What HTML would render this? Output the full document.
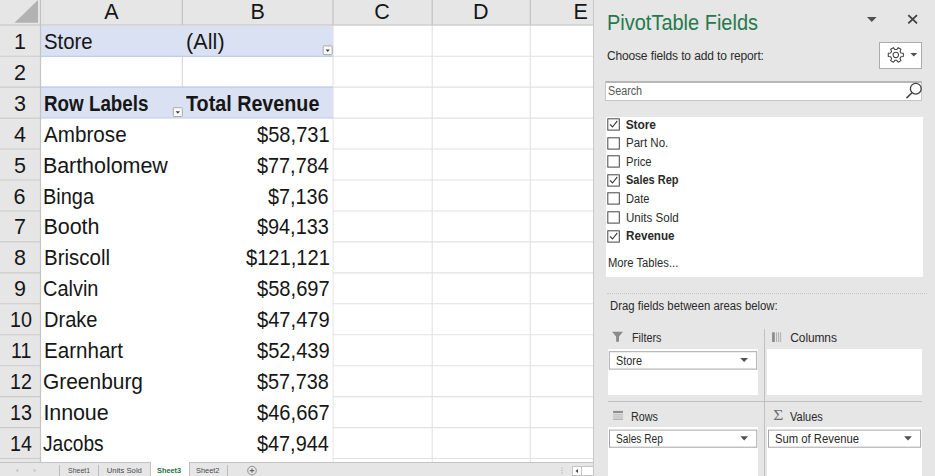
<!DOCTYPE html>
<html><head><meta charset="utf-8"><title>PivotTable</title>
<style>
html,body{margin:0;padding:0;}
body{width:935px;height:476px;overflow:hidden;background:#fff;position:relative;font-family:"Liberation Sans",sans-serif;color:#111;}
div,span{position:absolute;white-space:nowrap;box-sizing:border-box;}
.pane{left:594px;top:0;width:341px;height:476px;background:#e6e6e6;}
.box{background:#fff;}
.t{line-height:1;}
</style></head><body>

<svg style="position:absolute;left:0;top:0" width="594" height="463"><rect x="0" y="0" width="593.3" height="25" fill="#e6e6e6"/><rect x="0" y="25" width="40.5" height="438" fill="#e6e6e6"/><polygon points="38,0 38,22.7 14.5,22.7" fill="#b2b2b2"/><line x1="41" x2="593.3" y1="56.20" y2="56.20" stroke="#e2e2e2" stroke-width="1.1"/><line x1="41" x2="593.3" y1="87.15" y2="87.15" stroke="#e2e2e2" stroke-width="1.1"/><line x1="41" x2="593.3" y1="118.10" y2="118.10" stroke="#e2e2e2" stroke-width="1.1"/><line x1="41" x2="593.3" y1="149.05" y2="149.05" stroke="#e2e2e2" stroke-width="1.1"/><line x1="41" x2="593.3" y1="180.00" y2="180.00" stroke="#e2e2e2" stroke-width="1.1"/><line x1="41" x2="593.3" y1="210.95" y2="210.95" stroke="#e2e2e2" stroke-width="1.1"/><line x1="41" x2="593.3" y1="241.90" y2="241.90" stroke="#e2e2e2" stroke-width="1.1"/><line x1="41" x2="593.3" y1="272.85" y2="272.85" stroke="#e2e2e2" stroke-width="1.1"/><line x1="41" x2="593.3" y1="303.80" y2="303.80" stroke="#e2e2e2" stroke-width="1.1"/><line x1="41" x2="593.3" y1="334.75" y2="334.75" stroke="#e2e2e2" stroke-width="1.1"/><line x1="41" x2="593.3" y1="365.70" y2="365.70" stroke="#e2e2e2" stroke-width="1.1"/><line x1="41" x2="593.3" y1="396.65" y2="396.65" stroke="#e2e2e2" stroke-width="1.1"/><line x1="41" x2="593.3" y1="427.60" y2="427.60" stroke="#e2e2e2" stroke-width="1.1"/><line x1="41" x2="593.3" y1="458.55" y2="458.55" stroke="#e2e2e2" stroke-width="1.1"/><line x1="182.3" x2="182.3" y1="25.5" y2="462.5" stroke="#d6d6d6" stroke-width="1.1"/><line x1="333.0" x2="333.0" y1="25.5" y2="462.5" stroke="#e2e2e2" stroke-width="1.1"/><line x1="432.2" x2="432.2" y1="25.5" y2="462.5" stroke="#e2e2e2" stroke-width="1.1"/><line x1="530.3" x2="530.3" y1="25.5" y2="462.5" stroke="#e2e2e2" stroke-width="1.1"/><rect x="41" y="25.6" width="292.1" height="31.00" fill="#d9e1f2"/><line x1="41" x2="333.1" y1="56.30" y2="56.30" stroke="#b9c8e8" stroke-width="1"/><rect x="41" y="86.65" width="292.1" height="31.85" fill="#d9e1f2"/><line x1="41" x2="333.1" y1="87.15" y2="87.15" stroke="#b9c8e8" stroke-width="1"/><line x1="41" x2="333.1" y1="118.10" y2="118.10" stroke="#b9c8e8" stroke-width="1"/><rect x="41" y="118.60" width="291.4" height="343.80" fill="#fff"/><line x1="0" x2="40" y1="56.20" y2="56.20" stroke="#cbcbcb" stroke-width="1.1"/><line x1="0" x2="40" y1="87.15" y2="87.15" stroke="#cbcbcb" stroke-width="1.1"/><line x1="0" x2="40" y1="118.10" y2="118.10" stroke="#cbcbcb" stroke-width="1.1"/><line x1="0" x2="40" y1="149.05" y2="149.05" stroke="#cbcbcb" stroke-width="1.1"/><line x1="0" x2="40" y1="180.00" y2="180.00" stroke="#cbcbcb" stroke-width="1.1"/><line x1="0" x2="40" y1="210.95" y2="210.95" stroke="#cbcbcb" stroke-width="1.1"/><line x1="0" x2="40" y1="241.90" y2="241.90" stroke="#cbcbcb" stroke-width="1.1"/><line x1="0" x2="40" y1="272.85" y2="272.85" stroke="#cbcbcb" stroke-width="1.1"/><line x1="0" x2="40" y1="303.80" y2="303.80" stroke="#cbcbcb" stroke-width="1.1"/><line x1="0" x2="40" y1="334.75" y2="334.75" stroke="#cbcbcb" stroke-width="1.1"/><line x1="0" x2="40" y1="365.70" y2="365.70" stroke="#cbcbcb" stroke-width="1.1"/><line x1="0" x2="40" y1="396.65" y2="396.65" stroke="#cbcbcb" stroke-width="1.1"/><line x1="0" x2="40" y1="427.60" y2="427.60" stroke="#cbcbcb" stroke-width="1.1"/><line x1="0" x2="40" y1="458.55" y2="458.55" stroke="#cbcbcb" stroke-width="1.1"/><line x1="0" x2="593.3" y1="25" y2="25" stroke="#cecece" stroke-width="1.6"/><line x1="40.5" x2="40.5" y1="0" y2="25" stroke="#c2c2c2" stroke-width="1.2"/><line x1="182.3" x2="182.3" y1="0" y2="25" stroke="#c2c2c2" stroke-width="1.2"/><line x1="333.0" x2="333.0" y1="0" y2="25" stroke="#c2c2c2" stroke-width="1.2"/><line x1="432.2" x2="432.2" y1="0" y2="25" stroke="#c2c2c2" stroke-width="1.2"/><line x1="530.3" x2="530.3" y1="0" y2="25" stroke="#c2c2c2" stroke-width="1.2"/><line x1="40.5" x2="40.5" y1="25" y2="462.5" stroke="#c4c4c4" stroke-width="1.2"/></svg>
<svg style="position:absolute;left:321px;top:44px" width="13" height="13"><rect x="2.20" y="1.90" width="9" height="8.8" rx="0.8" fill="#fbfbfb" stroke="#a9a9a9"/><polygon points="4.60,5.50 8.80,5.50 6.70,7.90" fill="#3c3c3c"/></svg>
<svg style="position:absolute;left:171px;top:106px" width="13" height="13"><rect x="2.30" y="1.70" width="9" height="8.8" rx="0.8" fill="#fbfbfb" stroke="#a9a9a9"/><polygon points="4.70,5.30 8.90,5.30 6.80,7.70" fill="#3c3c3c"/></svg>
<div style="left:0;top:462px;width:594px;height:14px;background:#e6e6e6;border-top:1px solid #c4c4c4;"></div>
<div style="left:150px;top:462px;width:40px;height:14px;background:#fff;border-left:1px solid #bdbdbd;border-right:1px solid #bdbdbd;"></div>
<div style="left:59px;top:465px;width:1px;height:11px;background:#bcbcbc;"></div>
<div style="left:98px;top:465px;width:1px;height:11px;background:#bcbcbc;"></div>
<div style="left:227px;top:465px;width:1px;height:11px;background:#bcbcbc;"></div>
<svg style="position:absolute;left:245px;top:464px" width="14" height="12"><circle cx="7" cy="6.6" r="4.3" fill="none" stroke="#858585" stroke-width="0.9"/><path d="M4.8 6.6H9.2M7 4.4V8.8" stroke="#666" stroke-width="1.1"/></svg>
<svg style="position:absolute;left:12px;top:466px" width="30" height="9"><polygon points="6.3,2.6 6.3,6.6 3.7,4.6" fill="#c4c4c4"/><polygon points="21.6,2.6 21.6,6.6 24.2,4.6" fill="#c4c4c4"/></svg>
<svg style="position:absolute;left:558px;top:464px" width="36" height="12"><circle cx="4" cy="4" r="0.6" fill="#999"/><circle cx="4" cy="6.5" r="0.6" fill="#999"/><circle cx="4" cy="9" r="0.6" fill="#999"/><rect x="14.5" y="2.5" width="9" height="9" fill="#fff" stroke="#c4c4c4"/><polygon points="20,5 20,9 17.5,7" fill="#444"/><rect x="23.5" y="2.5" width="12" height="9" fill="#fff" stroke="#c4c4c4"/></svg>
<div style="left:593px;top:0;width:1px;height:476px;background:#c8c8c8;"></div>
<div class="pane"></div>
<svg style="position:absolute;left:860px;top:10px" width="70" height="18"><polygon points="7,7 16.6,7 11.8,12.1" fill="#505050"/><path d="M48.3 5.1L57 13.3M57 5.1L48.3 13.3" stroke="#404040" stroke-width="1.8"/></svg>
<div style="left:879px;top:42px;width:43px;height:27px;background:#fff;border:1px solid #ababab;"></div>
<svg style="position:absolute;left:880px;top:43px" width="41" height="25"><g transform="translate(15.8,11.9)" fill="none" stroke="#404040" stroke-width="1.05" stroke-linejoin="round"><circle r="2.7"/><path d="M5.17,-1.88 L7.53,-1.60 L7.53,1.60 L5.17,1.88 L4.21,3.54 L5.15,5.72 L2.38,7.32 L0.96,5.42 L-0.96,5.42 L-2.38,7.32 L-5.15,5.72 L-4.21,3.54 L-5.17,1.88 L-7.53,1.60 L-7.53,-1.60 L-5.17,-1.88 L-4.21,-3.54 L-5.15,-5.72 L-2.38,-7.32 L-0.96,-5.42 L0.96,-5.42 L2.38,-7.32 L5.15,-5.72 L4.21,-3.54Z"/></g><polygon points="30.3,9.9 37.3,9.9 33.8,13.6" fill="#505050"/></svg>
<div style="left:605px;top:81px;width:317px;height:20px;background:#fff;border:1px solid #c6c6c6;border-top:2px solid #b6b6b6;"></div>
<svg style="position:absolute;left:903px;top:81px" width="20" height="20"><circle cx="12.8" cy="7.7" r="5.4" fill="none" stroke="#404040" stroke-width="1.3"/><path d="M9.0 11.7L3.5 17.1" stroke="#404040" stroke-width="1.5"/></svg>
<div class="box" style="left:605.5px;top:117px;width:317px;height:160px;"></div>
<svg style="position:absolute;left:606px;top:117.0px" width="16" height="16"><rect x="1.8" y="1.8" width="11.5" height="11.3" fill="#fff" stroke="#444" stroke-width="1"/><path d="M4 7.4L6.5 10L11.3 3.9" fill="none" stroke="#333" stroke-width="1.1"/></svg>
<svg style="position:absolute;left:606px;top:135.6px" width="16" height="16"><rect x="1.8" y="1.8" width="11.5" height="11.3" fill="#fff" stroke="#444" stroke-width="1"/></svg>
<svg style="position:absolute;left:606px;top:154.2px" width="16" height="16"><rect x="1.8" y="1.8" width="11.5" height="11.3" fill="#fff" stroke="#444" stroke-width="1"/></svg>
<svg style="position:absolute;left:606px;top:172.8px" width="16" height="16"><rect x="1.8" y="1.8" width="11.5" height="11.3" fill="#fff" stroke="#444" stroke-width="1"/><path d="M4 7.4L6.5 10L11.3 3.9" fill="none" stroke="#333" stroke-width="1.1"/></svg>
<svg style="position:absolute;left:606px;top:191.4px" width="16" height="16"><rect x="1.8" y="1.8" width="11.5" height="11.3" fill="#fff" stroke="#444" stroke-width="1"/></svg>
<svg style="position:absolute;left:606px;top:210.0px" width="16" height="16"><rect x="1.8" y="1.8" width="11.5" height="11.3" fill="#fff" stroke="#444" stroke-width="1"/></svg>
<svg style="position:absolute;left:606px;top:228.6px" width="16" height="16"><rect x="1.8" y="1.8" width="11.5" height="11.3" fill="#fff" stroke="#444" stroke-width="1"/><path d="M4 7.4L6.5 10L11.3 3.9" fill="none" stroke="#333" stroke-width="1.1"/></svg>
<div style="left:607px;top:293px;width:320px;height:0;border-top:1px dotted #c6c6c6;"></div>
<div style="left:764px;top:329px;width:1px;height:147px;background:#c0c0c0;"></div>
<div style="left:608px;top:401px;width:314px;height:1px;background:#c0c0c0;"></div>
<div class="box" style="left:608px;top:349px;width:150px;height:46px;"></div>
<div class="box" style="left:767px;top:349px;width:155px;height:46px;"></div>
<div class="box" style="left:608px;top:427px;width:150px;height:49px;"></div>
<div class="box" style="left:767px;top:427px;width:155px;height:49px;"></div>
<svg style="position:absolute;left:610px;top:330px" width="15" height="14"><polygon points="2.1,1.7 13,1.7 9,6.6 9,11.8 6.1,11.8 6.1,6.6" fill="#8a8a8a"/></svg>
<svg style="position:absolute;left:770px;top:330px" width="14" height="14"><rect x="2.1" y="2.3" width="2.7" height="9.7" fill="#8a8a8a"/><rect x="6.1" y="2.3" width="1" height="9.7" fill="#adadad"/><rect x="8.1" y="2.3" width="1" height="9.7" fill="#adadad"/><rect x="10.1" y="2.3" width="1" height="9.7" fill="#adadad"/></svg>
<svg style="position:absolute;left:611px;top:408px" width="14" height="14"><rect x="2.1" y="2.9" width="9.9" height="2.2" fill="#8e8e8e"/><rect x="2.1" y="6.4" width="9.9" height="1" fill="#b2b2b2"/><rect x="2.1" y="8.5" width="9.9" height="1" fill="#b2b2b2"/><rect x="2.1" y="10.6" width="9.9" height="1.2" fill="#a8a8a8"/></svg>
<svg style="position:absolute;left:607px;top:350px" width="152" height="22"><rect x="2.30" y="1.70" width="147.40" height="17.40" fill="#fff" stroke="#a6a6a6" stroke-width="1"/><polygon points="133.20,7.90 141.00,7.90 137.10,12.00" fill="#505050"/></svg>
<svg style="position:absolute;left:608px;top:428px" width="152" height="22"><rect x="1.50" y="2.10" width="147.30" height="17.10" fill="#fff" stroke="#a6a6a6" stroke-width="1"/><polygon points="132.30,8.30 140.10,8.30 136.20,12.40" fill="#505050"/></svg>
<svg style="position:absolute;left:767px;top:428px" width="157" height="22"><rect x="1.50" y="2.10" width="152.10" height="17.10" fill="#fff" stroke="#a6a6a6" stroke-width="1"/><polygon points="137.10,8.30 144.90,8.30 141.00,12.40" fill="#505050"/></svg>
<div class="t" style="left:104.25px;top:0px;line-height:24px;font-size:21.5px;color:#161616;">A</div>
<div class="t" style="left:250.50px;top:0px;line-height:24px;font-size:21.5px;color:#161616;">B</div>
<div class="t" style="left:374.25px;top:0px;line-height:24px;font-size:21.5px;color:#161616;">C</div>
<div class="t" style="left:473.00px;top:0px;line-height:24px;font-size:21.5px;color:#161616;">D</div>
<div class="t" style="left:573.50px;top:0px;line-height:24px;font-size:21.5px;color:#161616;">E</div>
<div class="t" style="left:13.95px;top:30px;line-height:24px;font-size:21.5px;color:#161616;">1</div>
<div class="t" style="left:13.95px;top:61px;line-height:24px;font-size:21.5px;color:#161616;">2</div>
<div class="t" style="left:13.95px;top:92px;line-height:24px;font-size:21.5px;color:#161616;">3</div>
<div class="t" style="left:13.95px;top:123px;line-height:24px;font-size:21.5px;color:#161616;">4</div>
<div class="t" style="left:13.95px;top:154px;line-height:24px;font-size:21.5px;color:#161616;">5</div>
<div class="t" style="left:13.45px;top:185px;line-height:24px;font-size:21.5px;color:#161616;">6</div>
<div class="t" style="left:13.95px;top:215px;line-height:24px;font-size:21.5px;color:#161616;">7</div>
<div class="t" style="left:13.95px;top:246px;line-height:24px;font-size:21.5px;color:#161616;">8</div>
<div class="t" style="left:13.95px;top:277px;line-height:24px;font-size:21.5px;color:#161616;">9</div>
<div class="t" style="left:8.52px;top:308px;line-height:24px;font-size:21.5px;color:#161616;transform:scaleX(0.9172);transform-origin:50% 50%;">10</div>
<div class="t" style="left:9.82px;top:339px;line-height:24px;font-size:21.5px;color:#161616;transform:scaleX(0.9067);transform-origin:50% 50%;">11</div>
<div class="t" style="left:9.02px;top:370px;line-height:24px;font-size:21.5px;color:#161616;transform:scaleX(0.9135);transform-origin:50% 50%;">12</div>
<div class="t" style="left:8.52px;top:401px;line-height:24px;font-size:21.5px;color:#161616;transform:scaleX(0.9172);transform-origin:50% 50%;">13</div>
<div class="t" style="left:8.52px;top:432px;line-height:24px;font-size:21.5px;color:#161616;transform:scaleX(0.9172);transform-origin:50% 50%;">14</div>
<div class="t" style="left:43.80px;top:30px;line-height:24px;font-size:21.5px;color:#161616;transform:scaleX(0.9459);transform-origin:0 50%;">Store</div>
<div class="t" style="left:185.90px;top:30px;line-height:24px;font-size:21.5px;color:#161616;letter-spacing:0.137px;">(All)</div>
<div class="t" style="left:43.73px;top:92px;line-height:24px;font-size:21.5px;color:#161616;transform:scaleX(0.8742);transform-origin:0 50%;font-weight:bold;">Row Labels</div>
<div class="t" style="left:186.30px;top:92px;line-height:24px;font-size:21.5px;color:#161616;transform:scaleX(0.9175);transform-origin:0 50%;font-weight:bold;">Total Revenue</div>
<div class="t" style="left:43.90px;top:123px;line-height:24px;font-size:21.5px;color:#161616;transform:scaleX(0.9603);transform-origin:0 50%;">Ambrose</div>
<div class="t" style="left:257.20px;top:123px;line-height:24px;font-size:21.5px;color:#161616;transform:scaleX(0.9354);transform-origin:0 50%;">$58,731</div>
<div class="t" style="left:42.90px;top:154px;line-height:24px;font-size:21.5px;color:#161616;letter-spacing:-0.055px;">Bartholomew</div>
<div class="t" style="left:257.20px;top:154px;line-height:24px;font-size:21.5px;color:#161616;transform:scaleX(0.9234);transform-origin:0 50%;">$77,784</div>
<div class="t" style="left:42.97px;top:185px;line-height:24px;font-size:21.5px;color:#161616;transform:scaleX(0.9291);transform-origin:0 50%;">Binga</div>
<div class="t" style="left:268.40px;top:185px;line-height:24px;font-size:21.5px;color:#161616;transform:scaleX(0.9209);transform-origin:0 50%;">$7,136</div>
<div class="t" style="left:43.60px;top:215px;line-height:24px;font-size:21.5px;color:#161616;letter-spacing:-0.107px;">Booth</div>
<div class="t" style="left:257.20px;top:215px;line-height:24px;font-size:21.5px;color:#161616;transform:scaleX(0.9234);transform-origin:0 50%;">$94,133</div>
<div class="t" style="left:43.65px;top:246px;line-height:24px;font-size:21.5px;color:#161616;transform:scaleX(0.9524);transform-origin:0 50%;">Briscoll</div>
<div class="t" style="left:246.00px;top:246px;line-height:24px;font-size:21.5px;color:#161616;transform:scaleX(0.9356);transform-origin:0 50%;">$121,121</div>
<div class="t" style="left:43.27px;top:277px;line-height:24px;font-size:21.5px;color:#161616;transform:scaleX(0.9275);transform-origin:0 50%;">Calvin</div>
<div class="t" style="left:257.20px;top:277px;line-height:24px;font-size:21.5px;color:#161616;transform:scaleX(0.9354);transform-origin:0 50%;">$58,697</div>
<div class="t" style="left:43.67px;top:308px;line-height:24px;font-size:21.5px;color:#161616;transform:scaleX(0.9333);transform-origin:0 50%;">Drake</div>
<div class="t" style="left:257.20px;top:308px;line-height:24px;font-size:21.5px;color:#161616;transform:scaleX(0.9354);transform-origin:0 50%;">$47,479</div>
<div class="t" style="left:43.64px;top:339px;line-height:24px;font-size:21.5px;color:#161616;transform:scaleX(0.9572);transform-origin:0 50%;">Earnhart</div>
<div class="t" style="left:257.20px;top:339px;line-height:24px;font-size:21.5px;color:#161616;transform:scaleX(0.9354);transform-origin:0 50%;">$52,439</div>
<div class="t" style="left:43.23px;top:370px;line-height:24px;font-size:21.5px;color:#161616;transform:scaleX(0.9729);transform-origin:0 50%;">Greenburg</div>
<div class="t" style="left:257.20px;top:370px;line-height:24px;font-size:21.5px;color:#161616;transform:scaleX(0.9234);transform-origin:0 50%;">$57,738</div>
<div class="t" style="left:43.50px;top:401px;line-height:24px;font-size:21.5px;color:#161616;letter-spacing:-0.120px;">Innoue</div>
<div class="t" style="left:257.20px;top:401px;line-height:24px;font-size:21.5px;color:#161616;transform:scaleX(0.9354);transform-origin:0 50%;">$46,667</div>
<div class="t" style="left:43.20px;top:432px;line-height:24px;font-size:21.5px;color:#161616;transform:scaleX(0.8906);transform-origin:0 50%;">Jacobs</div>
<div class="t" style="left:257.20px;top:432px;line-height:24px;font-size:21.5px;color:#161616;transform:scaleX(0.9234);transform-origin:0 50%;">$47,944</div>
<div class="t" style="left:67.60px;top:466px;line-height:9px;font-size:7.7px;color:#4a4a4a;transform:scaleX(0.9050);transform-origin:0 50%;">Sheet1</div>
<div class="t" style="left:106.80px;top:466px;line-height:9px;font-size:7.7px;color:#4a4a4a;letter-spacing:0.005px;word-spacing:-0.005px;">Units Sold</div>
<div class="t" style="left:157.40px;top:466px;line-height:9px;font-size:7.7px;color:#217346;transform:scaleX(0.9545);transform-origin:0 50%;font-weight:bold;">Sheet3</div>
<div class="t" style="left:196.40px;top:466px;line-height:9px;font-size:7.7px;color:#4a4a4a;transform:scaleX(0.9631);transform-origin:0 50%;">Sheet2</div>
<div class="t" style="left:606.66px;top:11px;line-height:23px;font-size:21.2px;color:#257a4c;transform:scaleX(0.9428);transform-origin:0 50%;">PivotTable Fields</div>
<div class="t" style="left:606.90px;top:49px;line-height:14px;font-size:12px;color:#2a2a2a;letter-spacing:-0.149px;word-spacing:0.149px;">Choose fields to add to report:</div>
<div class="t" style="left:607.60px;top:84px;line-height:14px;font-size:12px;color:#555;transform:scaleX(0.8970);transform-origin:0 50%;">Search</div>
<div class="t" style="left:625.70px;top:118px;line-height:14px;font-size:12px;color:#2a2a2a;letter-spacing:-0.125px;font-weight:bold;">Store</div>
<div class="t" style="left:625.70px;top:136px;line-height:14px;font-size:12px;color:#2a2a2a;transform:scaleX(0.9615);transform-origin:0 50%;">Part No.</div>
<div class="t" style="left:625.70px;top:155px;line-height:14px;font-size:12px;color:#2a2a2a;transform:scaleX(0.9326);transform-origin:0 50%;">Price</div>
<div class="t" style="left:625.70px;top:173px;line-height:14px;font-size:12px;color:#2a2a2a;transform:scaleX(0.9153);transform-origin:0 50%;font-weight:bold;">Sales Rep</div>
<div class="t" style="left:625.70px;top:192px;line-height:14px;font-size:12px;color:#2a2a2a;transform:scaleX(0.9231);transform-origin:0 50%;">Date</div>
<div class="t" style="left:625.70px;top:211px;line-height:14px;font-size:12px;color:#2a2a2a;transform:scaleX(0.9645);transform-origin:0 50%;">Units Sold</div>
<div class="t" style="left:625.70px;top:229px;line-height:14px;font-size:12px;color:#2a2a2a;transform:scaleX(0.9712);transform-origin:0 50%;font-weight:bold;">Revenue</div>
<div class="t" style="left:608.00px;top:256px;line-height:14px;font-size:12px;color:#2a2a2a;transform:scaleX(0.9356);transform-origin:0 50%;">More Tables...</div>
<div class="t" style="left:610.10px;top:299px;line-height:14px;font-size:12px;color:#2a2a2a;transform:scaleX(0.9452);transform-origin:0 50%;">Drag fields between areas below:</div>
<div class="t" style="left:631.50px;top:331px;line-height:14px;font-size:12px;color:#2a2a2a;transform:scaleX(0.9000);transform-origin:0 50%;">Filters</div>
<div class="t" style="left:790.30px;top:331px;line-height:14px;font-size:12px;color:#2a2a2a;letter-spacing:-0.125px;">Columns</div>
<div class="t" style="left:631.20px;top:410px;line-height:14px;font-size:12px;color:#2a2a2a;transform:scaleX(0.8965);transform-origin:0 50%;">Rows</div>
<div class="t" style="left:790.00px;top:410px;line-height:14px;font-size:12px;color:#2a2a2a;transform:scaleX(0.9162);transform-origin:0 50%;">Values</div>
<div class="t" style="left:616.40px;top:354px;line-height:14px;font-size:12px;color:#2a2a2a;transform:scaleX(0.9032);transform-origin:0 50%;">Store</div>
<div class="t" style="left:616.40px;top:432px;line-height:14px;font-size:12px;color:#2a2a2a;transform:scaleX(0.8457);transform-origin:0 50%;">Sales Rep</div>
<div class="t" style="left:775.20px;top:432px;line-height:14px;font-size:12px;color:#2a2a2a;transform:scaleX(0.9397);transform-origin:0 50%;">Sum of Revenue</div>
<div class="t" style="left:773.55px;top:407px;line-height:16px;font-size:14.5px;color:#6e6e6e;font-family:'Liberation Serif',serif;transform:scaleX(1.2);transform-origin:50% 50%;">Σ</div>
</body></html>
